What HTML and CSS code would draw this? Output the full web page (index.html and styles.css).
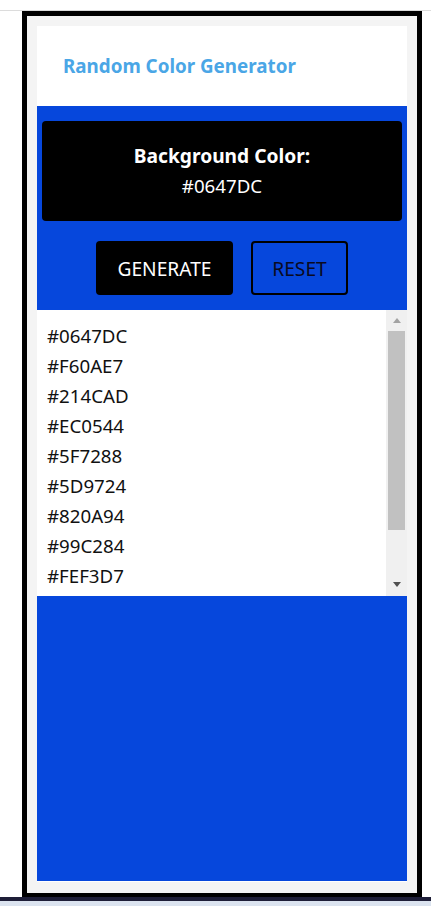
FILE: index.html
```html
<!DOCTYPE html>
<html lang="en">
<head>
<meta charset="utf-8">
<title>Random Color Generator</title>
<link rel="stylesheet" href="styles.css">
</head>
<body>
<div class="page">
  <div class="frame">
    <div class="card">
      <header class="header">
        <h1 class="title">Random Color Generator</h1>
      </header>
      <section class="controls">
        <div class="display">
          <div class="display-label">Background Color:</div>
          <div class="display-value">#0647DC</div>
        </div>
        <div class="buttons">
          <button class="btn btn-generate">GENERATE</button>
          <button class="btn btn-reset">RESET</button>
        </div>
      </section>
      <section class="history">
        <ul class="history-list">
          <li>#0647DC</li>
          <li>#F60AE7</li>
          <li>#214CAD</li>
          <li>#EC0544</li>
          <li>#5F7288</li>
          <li>#5D9724</li>
          <li>#820A94</li>
          <li>#99C284</li>
          <li>#FEF3D7</li>
        </ul>
        <div class="scrollbar">
          <span class="arrow arrow-up"></span>
          <span class="thumb"></span>
          <span class="track-rest"></span>
          <span class="arrow arrow-down"></span>
        </div>
      </section>
      <div class="fill"></div>
    </div>
  </div>
</div>
<div class="taskbar-edge"></div>
</body>
</html>
```

FILE: styles.css
```css
html, body {
  margin: 0;
  padding: 0;
  background: #ffffff;
  height: 906px;
  overflow: hidden;
}

body {
  font-family: "Noto Sans", "Open Sans", sans-serif;
}

.page {
  margin-top: 10px;
  border-top: 1px solid #dcdcdc;
  padding-left: 22px;
}

.frame {
  width: 370px;
  border: 5px solid #000;
  background: #f4f4f4;
  padding: 10px 10px 11px 10px;
}

.card {
  width: 370px;
  height: 856px;
  background: #ffffff;
  display: flex;
  flex-direction: column;
}

.header {
  height: 80px;
  display: flex;
  align-items: center;
  padding-left: 26px;
}

.title {
  margin: 0;
  font-size: 18.8px;
  font-weight: 700;
  color: #4aa6e6;
  line-height: 1;
}

.controls {
  background: #0647dc;
  padding: 15px 5px 15px 5px;
  display: flex;
  flex-direction: column;
  gap: 20px;
}

.display {
  height: 100px;
  background: #000;
  border-radius: 4px;
  color: #fff;
  display: flex;
  flex-direction: column;
  justify-content: center;
  align-items: center;
  font-size: 18.7px;
  line-height: 30px;
}

.display-label {
  font-weight: 700;
  font-size: 19.2px;
}

.buttons {
  display: flex;
  justify-content: center;
  gap: 18px;
}

.btn {
  height: 54px;
  font-family: inherit;
  font-size: 19.2px;
  border-radius: 4px;
  padding: 0;
  cursor: pointer;
}

.btn-generate {
  width: 137px;
  background: #000;
  color: #fff;
  border: none;
}

.btn-reset {
  width: 97px;
  background: transparent;
  color: #0a0a22;
  border: 2px solid #000;
}

.history {
  height: 286px;
  display: flex;
  background: #fff;
}

.history-list {
  flex: 1;
  margin: 0;
  padding: 11px 0 0 10px;
  list-style: none;
  overflow: hidden;
  font-size: 18.7px;
  line-height: 30px;
  color: #111;
}

.scrollbar {
  width: 21px;
  background: #f0f0f0;
  display: flex;
  flex-direction: column;
  align-items: center;
  padding-top: 8px;
  box-sizing: border-box;
}

.arrow {
  width: 0;
  height: 0;
  border-left: 4.5px solid transparent;
  border-right: 4.5px solid transparent;
}

.arrow-up {
  border-bottom: 5px solid #a3a3a3;
  margin-bottom: 8px;
}

.thumb {
  width: 17px;
  height: 199px;
  background: #c1c1c1;
}

.track-rest {
  flex: 1;
}

.arrow-down {
  border-top: 5px solid #505050;
  margin-bottom: 9px;
}

.fill {
  flex: 1;
  background: #0647dc;
  margin-bottom: 1px;
}

.taskbar-edge {
  position: fixed;
  left: 0;
  right: 0;
  bottom: 0;
  height: 5px;
  border-top: 4px solid #1e1e38;
  background: #dbe3ef;
}
```
